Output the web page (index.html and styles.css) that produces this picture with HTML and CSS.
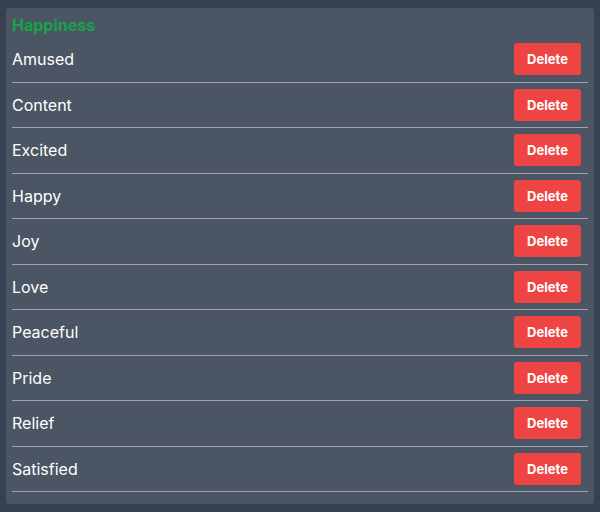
FILE: index.html
```html
<!DOCTYPE html>
<html>
<head>
<meta charset="utf-8">
<link rel="stylesheet" href="styles.css">
</head>
<body>
<div class="card">
  <h2 class="title">Happiness</h2>
  <ul class="list">
    <li class="row"><span class="name">Amused</span><button class="del">Delete</button></li>
    <li class="row"><span class="name">Content</span><button class="del">Delete</button></li>
    <li class="row"><span class="name">Excited</span><button class="del">Delete</button></li>
    <li class="row"><span class="name">Happy</span><button class="del">Delete</button></li>
    <li class="row"><span class="name">Joy</span><button class="del">Delete</button></li>
    <li class="row"><span class="name">Love</span><button class="del">Delete</button></li>
    <li class="row"><span class="name">Peaceful</span><button class="del">Delete</button></li>
    <li class="row"><span class="name">Pride</span><button class="del">Delete</button></li>
    <li class="row"><span class="name">Relief</span><button class="del">Delete</button></li>
    <li class="row"><span class="name">Satisfied</span><button class="del">Delete</button></li>
  </ul>
</div>
</body>
</html>
```
FILE: styles.css
```css
html, body {
  margin: 0;
  background: #374151;
  font-family: Inter, "Noto Sans", sans-serif;
}
body {
  padding: 8px 6px 8px 6px;
}
.card {
  background: #4b5563;
  border-radius: 3px;
  padding: 6px 6px 12px 6px;
}
.title {
  margin: 0;
  color: #16a34a;
  font-size: 16px;
  font-weight: 700;
  line-height: 23px;
}
.list {
  list-style: none;
  margin: 0;
  padding: 0;
}
.row {
  display: flex;
  align-items: center;
  justify-content: space-between;
  padding: 6.25px 7px 6.25px 0;
  border-bottom: 1px solid #9ca3af;
}
.name {
  color: #ffffff;
  font-size: 16px;
}
.del {
  background: #ef4444;
  color: #ffffff;
  border: none;
  border-radius: 3px;
  font-family: Inter, "Noto Sans", sans-serif;
  font-weight: 700;
  font-size: 13px;
  line-height: 16px;
  height: 32px;
  width: 67px;
  padding: 0;
}
```
